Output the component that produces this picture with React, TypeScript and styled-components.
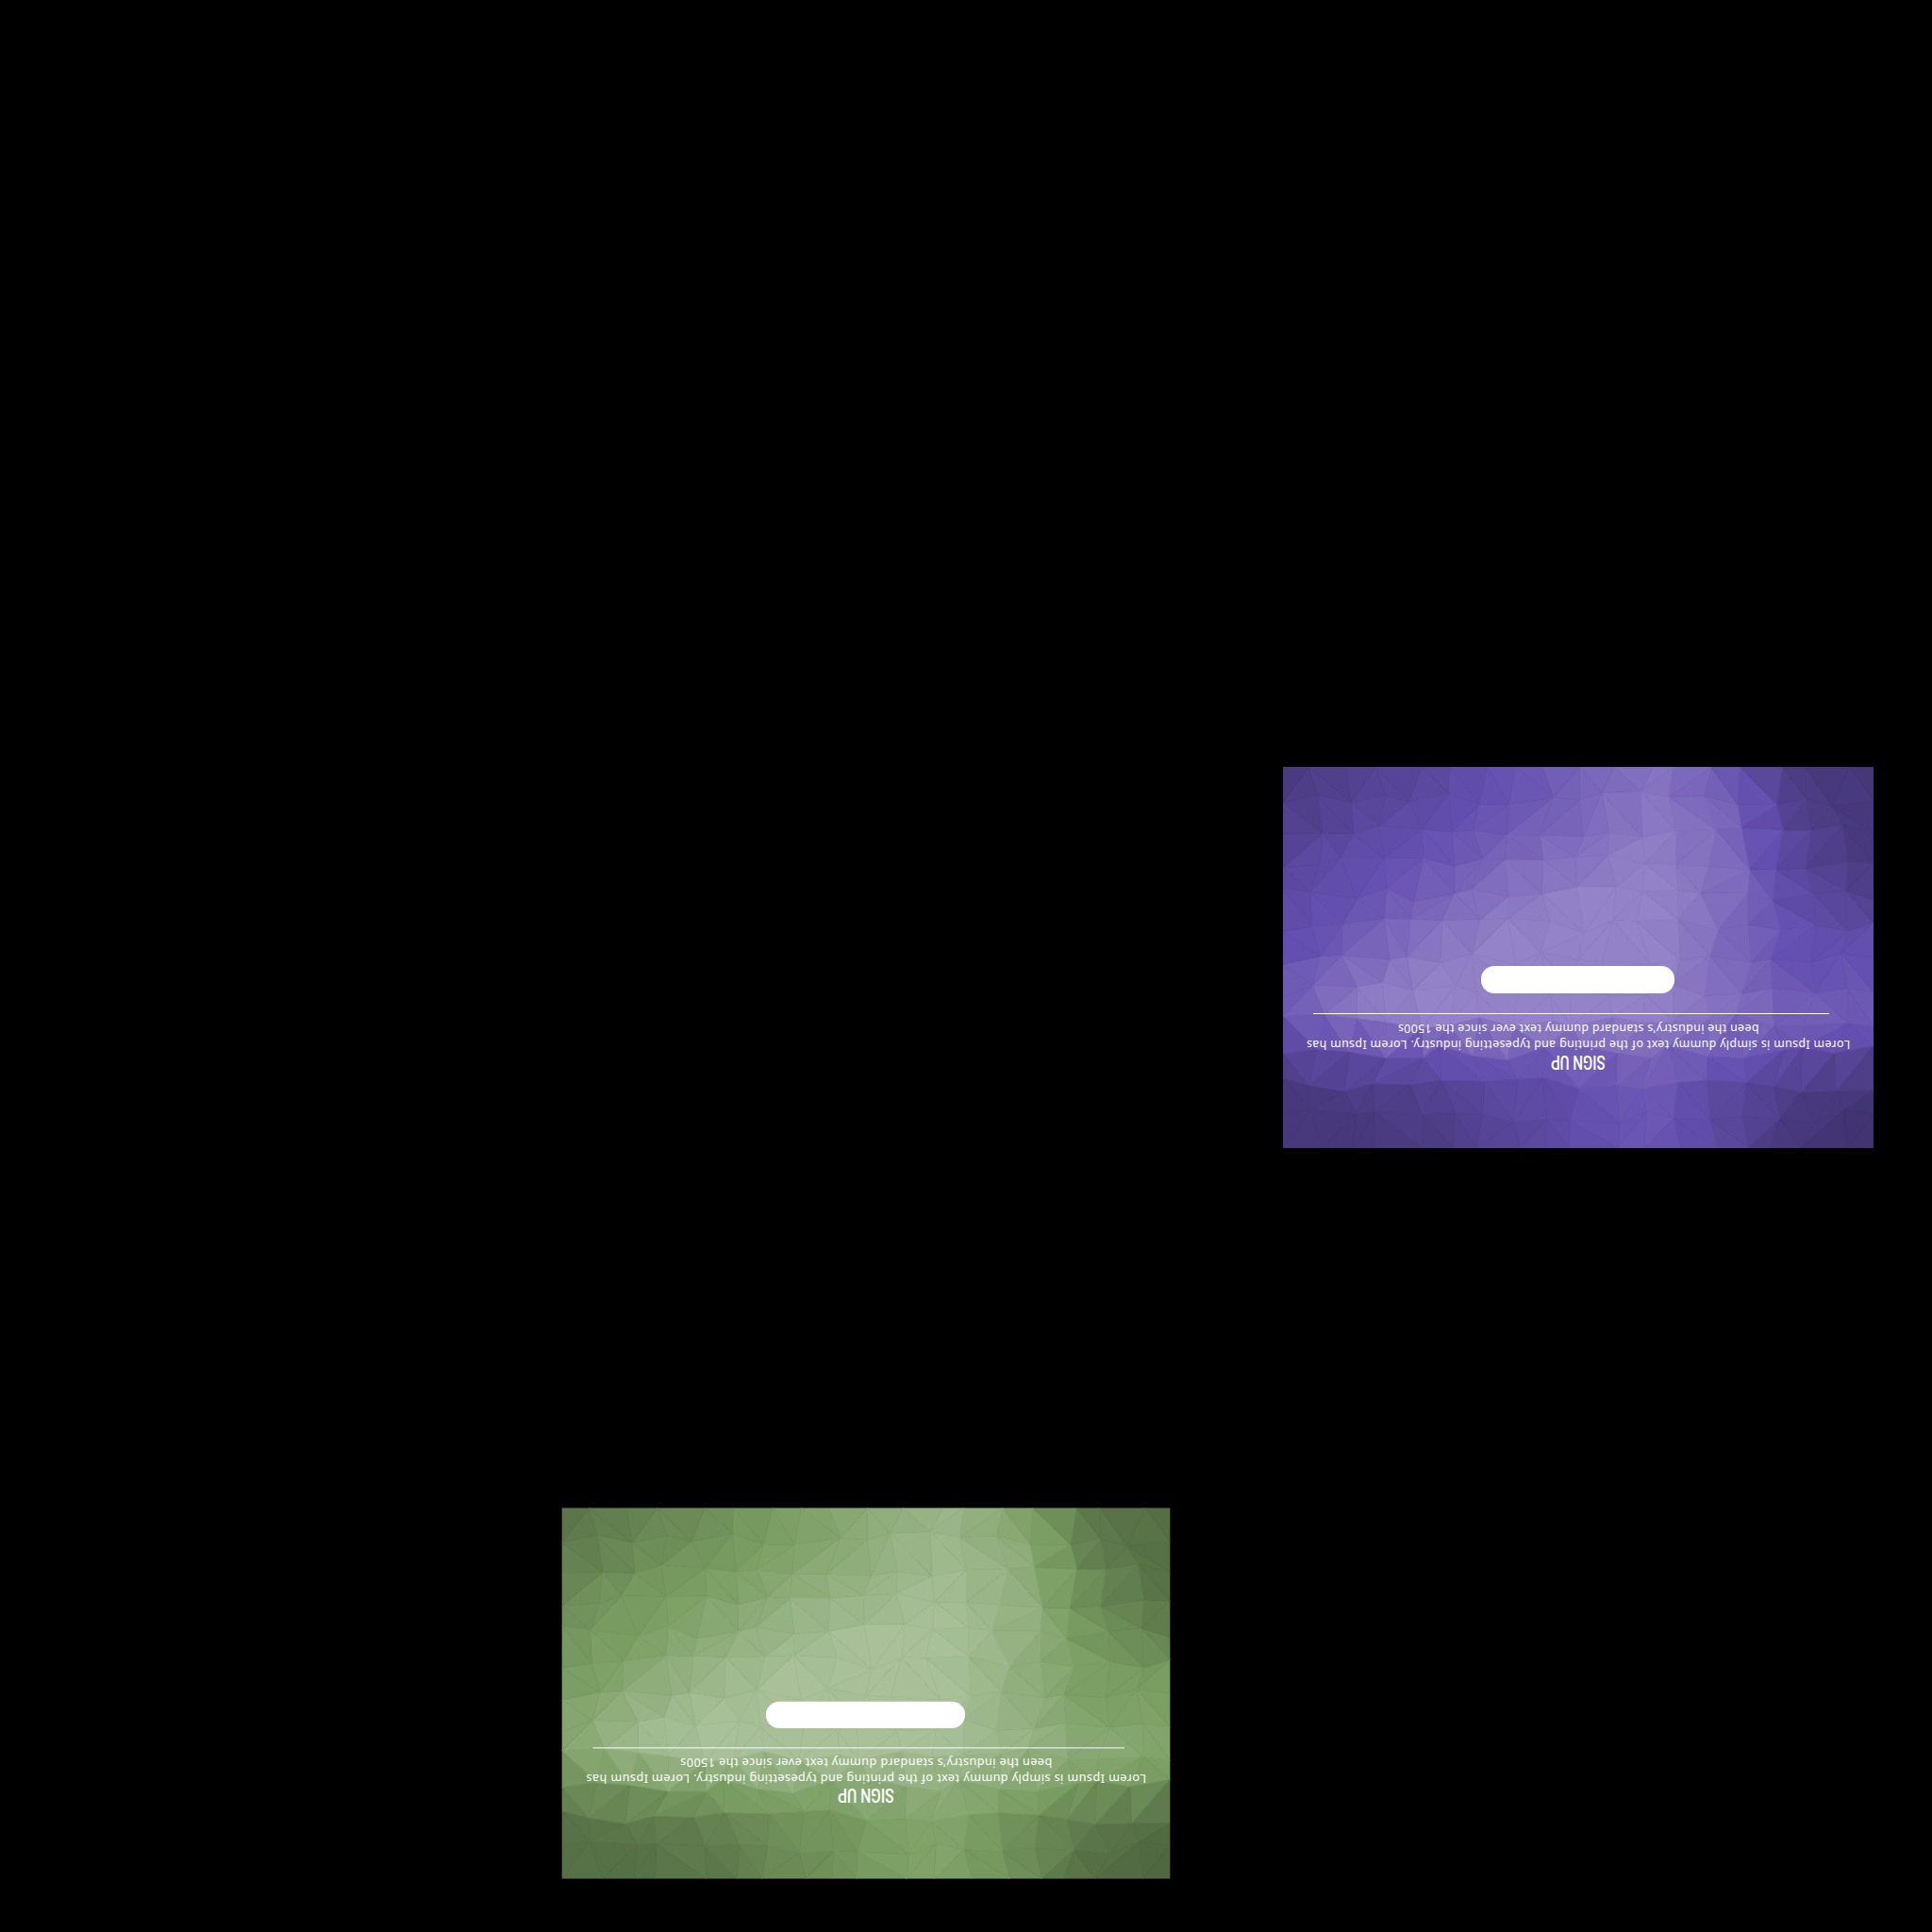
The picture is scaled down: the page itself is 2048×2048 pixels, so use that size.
import React, { useMemo } from "react";
import styled, { createGlobalStyle } from "styled-components";

const GlobalStyle = createGlobalStyle`
  html, body { margin: 0; padding: 0; background: #000; }
  body { min-height: 2048px; font-family: "Noto Sans", sans-serif; }
`;

const Stage = styled.main`
  display: flex;
  flex-direction: column;
  align-items: flex-start;
  width: 2048px;
  height: 2048px;
  background: #000;
  overflow: hidden;
`;

const Card = styled.section<{ $left: number; $top: number; $sx: number; $sy: number }>`
  position: relative;
  flex: none;
  display: flex;
  flex-direction: column;
  align-items: center;
  box-sizing: border-box;
  width: 626px;
  height: 404px;
  margin-left: ${(p) => p.$left}px;
  margin-top: ${(p) => p.$top}px;
  padding-top: 80px;
  color: #fff;
  overflow: hidden;
  transform: rotate(180deg) scale(${(p) => p.$sx}, ${(p) => p.$sy});
`;

const Backdrop = styled.svg`
  position: absolute;
  inset: 0;
  width: 100%;
  height: 100%;
`;

const Title = styled.h2`
  position: relative;
  margin: 0;
  font-family: Roboto, sans-serif;
  font-size: 21px;
  font-weight: 500;
  line-height: 23px;
  white-space: nowrap;
  transform: scaleX(0.72);
`;

const Copy = styled.p`
  position: relative;
  width: 590px;
  margin: -1px 0 0;
  font-family: "Noto Sans", sans-serif;
  font-size: 12.3px;
  line-height: 16.5px;
  letter-spacing: 0.4px;
  text-align: center;
  color: #fff;
`;

const Rule = styled.hr`
  position: relative;
  align-self: stretch;
  height: 1px;
  margin: 7px 32px 0 47px;
  border: 0;
  background: #fff;
`;

const Pill = styled.button`
  position: relative;
  width: 205px;
  height: 29px;
  margin-top: 21px;
  padding: 0;
  border: 0;
  border-radius: 14px;
  background: #fff;
`;

type Ramp = [number[], number[], number[]];

const PURPLE: Ramp = [[64, 51, 111], [100, 80, 176], [148, 131, 200]];
const GREEN: Ramp = [[79, 102, 63], [123, 159, 100], [169, 192, 153]];

const ROWS = [0, 0.1, 0.22, 0.35, 0.47, 0.58, 0.66, 0.74, 0.85, 1];
const FIELD = [
  [0.1, 0.22, 0.33, 0.52, 0.66, 0.85, 0.55, 0.16, 0.08],
  [0.18, 0.3, 0.42, 0.55, 0.7, 0.88, 0.7, 0.18, 0.05],
  [0.3, 0.45, 0.52, 0.68, 0.82, 0.97, 0.75, 0.32, 0.08],
  [0.4, 0.52, 0.68, 0.88, 0.98, 1, 0.8, 0.42, 0.25],
  [0.45, 0.65, 0.88, 1, 1, 1, 0.75, 0.5, 0.48],
  [0.6, 0.88, 1, 1, 1, 1, 0.8, 0.55, 0.55],
  [0.55, 0.88, 1, 1, 1, 0.95, 0.85, 0.65, 0.6],
  [0.36, 0.5, 0.58, 0.64, 0.68, 0.74, 0.6, 0.5, 0.38],
  [0.1, 0.18, 0.26, 0.38, 0.48, 0.6, 0.38, 0.15, 0.05],
  [0.08, 0.06, 0.14, 0.3, 0.46, 0.56, 0.34, 0.06, 0],
];

const lerp = (a: number, b: number, t: number) => a + (b - a) * t;

function fieldAt(u: number, v: number) {
  const cx = Math.min(7.999, Math.max(0, u * 8));
  const c = Math.floor(cx);
  const tx = cx - c;
  let r = 0;
  while (r < ROWS.length - 2 && v > ROWS[r + 1]) r++;
  const ty = Math.min(1, Math.max(0, (v - ROWS[r]) / (ROWS[r + 1] - ROWS[r])));
  return lerp(lerp(FIELD[r][c], FIELD[r][c + 1], tx), lerp(FIELD[r + 1][c], FIELD[r + 1][c + 1], tx), ty);
}

function shade(ramp: Ramp, level: number) {
  const t = Math.min(1, Math.max(0, level));
  const [a, b] = t < 0.5 ? [ramp[0], ramp[1]] : [ramp[1], ramp[2]];
  const k = t < 0.5 ? t * 2 : (t - 0.5) * 2;
  return `rgb(${a.map((x, i) => Math.round(lerp(x, b[i], k))).join(",")})`;
}

function buildMesh(ramp: Ramp) {
  const W = 626;
  const H = 404;
  const cols = 18;
  const rows = 12;
  let seed = 20480;
  const rnd = () => {
    seed = (seed * 16807) % 2147483647;
    return seed / 2147483647;
  };
  const pts: [number, number][][] = [];
  for (let y = 0; y <= rows; y++) {
    const line: [number, number][] = [];
    for (let x = 0; x <= cols; x++) {
      const jx = x === 0 || x === cols ? 0 : (rnd() - 0.5) * 20;
      const jy = y === 0 || y === rows ? 0 : (rnd() - 0.5) * 16;
      line.push([(x / cols) * W + jx, (y / rows) * H + jy]);
    }
    pts.push(line);
  }
  const tris: { d: string; c: string }[] = [];
  const push = (a: [number, number], b: [number, number], c: [number, number]) => {
    const mx = (a[0] + b[0] + c[0]) / 3;
    const my = (a[1] + b[1] + c[1]) / 3;
    // The picture is turned half a circle, so the field is read from the far corner.
    const level = fieldAt(1 - mx / W, 1 - my / H) + (rnd() - 0.5) * 0.04;
    const col = shade(ramp, level);
    tris.push({ d: `${a[0].toFixed(1)},${a[1].toFixed(1)} ${b[0].toFixed(1)},${b[1].toFixed(1)} ${c[0].toFixed(1)},${c[1].toFixed(1)}`, c: col });
  };
  for (let y = 0; y < rows; y++) {
    for (let x = 0; x < cols; x++) {
      const p00 = pts[y][x];
      const p10 = pts[y][x + 1];
      const p01 = pts[y + 1][x];
      const p11 = pts[y + 1][x + 1];
      if (rnd() > 0.5) {
        push(p00, p10, p11);
        push(p00, p11, p01);
      } else {
        push(p00, p10, p01);
        push(p10, p11, p01);
      }
    }
  }
  return tris;
}

function LowPoly({ ramp }: { ramp: Ramp }) {
  const tris = useMemo(() => buildMesh(ramp), [ramp]);
  return (
    <Backdrop viewBox="0 0 626 404" preserveAspectRatio="none" aria-hidden="true">
      {tris.map((t, i) => (
        <polygon key={i} points={t.d} fill={t.c} stroke={t.c} strokeWidth={0.7} />
      ))}
    </Backdrop>
  );
}

function SignUpCard(props: { ramp: Ramp; left: number; top: number; sx: number; sy: number }) {
  return (
    <Card $left={props.left} $top={props.top} $sx={props.sx} $sy={props.sy}>
      <LowPoly ramp={props.ramp} />
      <Title>SIGN UP</Title>
      <Copy>
        Lorem Ipsum is simply dummy text of the printing and typesetting industry. Lorem Ipsum has
        <br />
        been the industry's standard dummy text ever since the 1500s
      </Copy>
      <Rule />
      <Pill type="button" aria-label="Sign up" />
    </Card>
  );
}

export default function App() {
  return (
    <Stage>
      <GlobalStyle />
      <SignUpCard ramp={PURPLE} left={1360} top={813} sx={1} sy={1} />
      <SignUpCard ramp={GREEN} left={604.5} top={375.5} sx={1.03} sy={0.973} />
    </Stage>
  );
}
